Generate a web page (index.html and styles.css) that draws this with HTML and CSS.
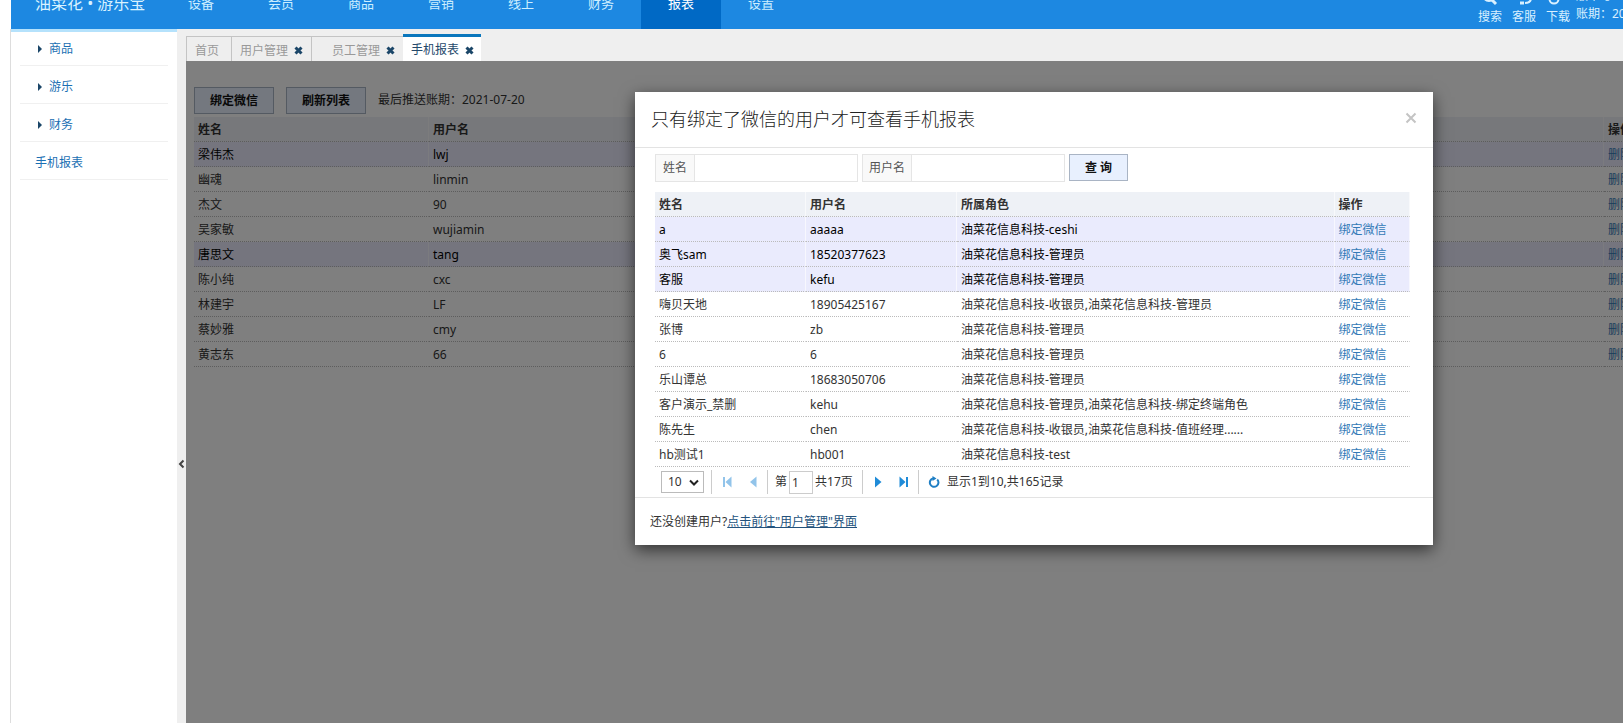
FILE: index.html
```html
<!DOCTYPE html>
<html lang="zh-CN">
<head>
<meta charset="utf-8">
<title>手机报表</title>
<link rel="stylesheet" href="styles.css">
</head>
<body>
<div class="page">
  <header class="topbar">
    <div class="topbar-inner">
      <div class="brand">油菜花 • 游乐宝</div>
      <nav class="menu">
        <a href="#">设备</a><a href="#">会员</a><a href="#">商品</a><a href="#">营销</a><a href="#">线上</a><a href="#">财务</a><a href="#" class="active">报表</a><a href="#">设置</a>
      </nav>
      <div class="tools">
        <a href="#"><svg width="24" height="20" viewBox="0 0 24 20"><circle cx="11" cy="8" r="6"/><path d="M14 13l4 4" stroke-width="3"/></svg>搜索</a>
        <a href="#"><svg width="24" height="20" viewBox="0 0 24 20"><path d="M5 11V8a7 7 0 0 1 14 0v3c0 3-2 5-6 5"/><path d="M8 16h4" stroke-width="3"/></svg>客服</a>
        <a href="#"><svg width="24" height="20" viewBox="0 0 24 20"><circle cx="8" cy="12" r="4.500"/><path d="M8 5v6"/></svg>下载</a>
        <div class="account"><span>版本号：旗舰版</span><span>账期：2021-07-20</span></div>
      </div>
    </div>
  </header>
  <div class="body">
    <aside class="sidebar">
      <ul>
        <li><a href="#" class="group">商品</a></li>
        <li><a href="#" class="group">游乐</a></li>
        <li><a href="#" class="group">财务</a></li>
        <li><a href="#">手机报表</a></li>
      </ul>
    </aside>
    <button class="splitter" type="button" aria-label="收起"><svg width="7" height="10" viewBox="0 0 7 10"><path d="M5.500 1.500L2 5l3.500 3.500"/></svg></button>
    <main class="main">
      <div class="tabs">
        <div class="tab"><span>首页</span></div>
        <div class="tab closable"><span>用户管理</span><button type="button" aria-label="关闭"><svg width="9" height="9" viewBox="0 0 9 9"><path d="M1.500 1.500l6 6M7.500 1.500l-6 6"/></svg></button></div>
        <div class="tab closable wide"><span>员工管理</span><button type="button" aria-label="关闭"><svg width="9" height="9" viewBox="0 0 9 9"><path d="M1.500 1.500l6 6M7.500 1.500l-6 6"/></svg></button></div>
        <div class="tab closable active"><span>手机报表</span><button type="button" aria-label="关闭"><svg width="9" height="9" viewBox="0 0 9 9"><path d="M1.500 1.500l6 6M7.500 1.500l-6 6"/></svg></button></div>
      </div>
      <div class="content">
        <div class="actions">
          <button type="button" class="btn">绑定微信</button>
          <button type="button" class="btn">刷新列表</button>
          <span>最后推送账期：2021-07-20</span>
        </div>
        <table class="grid users">
          <colgroup><col class="c-user"><col class="c-user"><col><col class="c-op"></colgroup>
          <thead><tr><th>姓名</th><th>用户名</th><th></th><th>操作</th></tr></thead>
          <tbody>
            <tr class="on"><td>梁伟杰</td><td>lwj</td><td></td><td><a href="#">删除</a></td></tr>
            <tr><td>幽魂</td><td>linmin</td><td></td><td><a href="#">删除</a></td></tr>
            <tr><td>杰文</td><td>90</td><td></td><td><a href="#">删除</a></td></tr>
            <tr><td>吴家敏</td><td>wujiamin</td><td></td><td><a href="#">删除</a></td></tr>
            <tr class="on"><td>唐思文</td><td>tang</td><td></td><td><a href="#">删除</a></td></tr>
            <tr><td>陈小纯</td><td>cxc</td><td></td><td><a href="#">删除</a></td></tr>
            <tr><td>林建宇</td><td>LF</td><td></td><td><a href="#">删除</a></td></tr>
            <tr><td>蔡妙雅</td><td>cmy</td><td></td><td><a href="#">删除</a></td></tr>
            <tr><td>黄志东</td><td>66</td><td></td><td><a href="#">删除</a></td></tr>
          </tbody>
        </table>
        <div class="overlay">
          <section class="modal" role="dialog" aria-labelledby="modal-title">
            <div class="modal-head">
              <h2 id="modal-title">只有绑定了微信的用户才可查看手机报表</h2>
              <button type="button" class="close" aria-label="关闭"><svg width="12" height="12" viewBox="0 0 12 12"><path d="M1.500 1.500l9 9M10.500 1.500l-9 9"/></svg></button>
            </div>
            <div class="modal-body">
              <form class="search">
                <div class="field"><label for="name">姓名</label><input id="name" type="text"></div>
                <div class="field account-field"><label for="user">用户名</label><input id="user" type="text"></div>
                <button type="button" class="btn query">查 询</button>
              </form>
              <table class="grid picker">
                <colgroup><col class="p20"><col class="p20"><col class="p50"><col class="p10"></colgroup>
                <thead><tr><th>姓名</th><th>用户名</th><th>所属角色</th><th>操作</th></tr></thead>
                <tbody>
                  <tr class="on"><td>a</td><td>aaaaa</td><td>油菜花信息科技-ceshi</td><td><a href="#">绑定微信</a></td></tr>
                  <tr class="on"><td>奥飞sam</td><td>18520377623</td><td>油菜花信息科技-管理员</td><td><a href="#">绑定微信</a></td></tr>
                  <tr class="on"><td>客服</td><td>kefu</td><td>油菜花信息科技-管理员</td><td><a href="#">绑定微信</a></td></tr>
                  <tr><td>嗨贝天地</td><td>18905425167</td><td>油菜花信息科技-收银员,油菜花信息科技-管理员</td><td><a href="#">绑定微信</a></td></tr>
                  <tr><td>张博</td><td>zb</td><td>油菜花信息科技-管理员</td><td><a href="#">绑定微信</a></td></tr>
                  <tr><td>6</td><td>6</td><td>油菜花信息科技-管理员</td><td><a href="#">绑定微信</a></td></tr>
                  <tr><td>乐山谭总</td><td>18683050706</td><td>油菜花信息科技-管理员</td><td><a href="#">绑定微信</a></td></tr>
                  <tr><td>客户演示_禁删</td><td>kehu</td><td>油菜花信息科技-管理员,油菜花信息科技-绑定终端角色</td><td><a href="#">绑定微信</a></td></tr>
                  <tr><td>陈先生</td><td>chen</td><td>油菜花信息科技-收银员,油菜花信息科技-值班经理......</td><td><a href="#">绑定微信</a></td></tr>
                  <tr><td>hb测试1</td><td>hb001</td><td>油菜花信息科技-test</td><td><a href="#">绑定微信</a></td></tr>
                </tbody>
              </table>
              <div class="pager">
                <div class="seg size"><span class="select"><select aria-label="每页条数"><option>10</option></select><svg width="10" height="7" viewBox="0 0 10 7"><path d="M1 1.500l4 4 4-4"/></svg></span></div>
                <div class="seg nav off">
                  <button type="button" aria-label="首页"><svg width="10" height="12" viewBox="0 0 10 12"><path d="M1 1h2v10H1zM9.500 .5v11L3.500 6z"/></svg></button>
                  <button type="button" aria-label="上一页"><svg width="8" height="12" viewBox="0 0 8 12"><path d="M7.500 .5v11L1 6z"/></svg></button>
                </div>
                <div class="seg jump"><label for="pageno">第</label><input id="pageno" type="text" value="1"><span>共17页</span></div>
                <div class="seg nav next">
                  <button type="button" aria-label="下一页"><svg width="8" height="12" viewBox="0 0 8 12"><path d="M1 .5v11L7.500 6z"/></svg></button>
                  <button type="button" aria-label="末页"><svg width="10" height="12" viewBox="0 0 10 12"><path d="M7 1h2v10H7zM.5 .5v11l6-5.500z"/></svg></button>
                </div>
                <div class="seg info"><button type="button" aria-label="刷新"><svg width="12" height="12" viewBox="0 0 12 12"><path class="ring" d="M9.200 3.500A4.300 4.300 0 1 1 5 2.400"/><path d="M4.500 0L8.500 2.400L4.500 5z"/></svg></button><span>显示1到10,共165记录</span></div>
              </div>
            </div>
            <div class="modal-foot">还没创建用户?<a href="#">点击前往"用户管理"界面</a></div>
          </section>
        </div>
      </div>
    </main>
  </div>
</div>
</body>
</html>
```
FILE: styles.css
```css
* { box-sizing: border-box; }
html { height: 100%; overflow: hidden; }
body {
  height: 100%; margin: 0; overflow: hidden; background: #fff; color: #333;
  font: 12px/22px "Noto Sans", "Noto Sans CJK SC", sans-serif;
}
a { color: #337ab7; text-decoration: none; }
button, input, select { font: inherit; color: inherit; margin: 0; padding: 0; }
button { cursor: pointer; }
ul { list-style: none; margin: 0; padding: 0; }
svg { display: block; }

/* The layout is wider than small windows; the excess is cut off. */
.page { display: flex; flex-direction: column; min-width: 1882px; height: 100%; padding-left: 10px; }

.topbar { display: flex; align-items: flex-end; height: 29px; margin-left: 1px; overflow: hidden; background: #1d88e1; flex: none; }
.topbar-inner { display: flex; flex: 1; height: 50px; color: #fff; }
.brand { width: 150px; padding-left: 24px; font-size: 16px; line-height: 48px; color: #d9f2ff; white-space: nowrap; }
.menu { display: flex; flex: 1; }
.menu a { width: 80px; text-align: center; font-size: 13px; line-height: 48px; color: #cdefff; }
.menu .active { background: #0069c5; color: #fff; }
.tools { display: flex; gap: 10px; width: 404px; }
.tools > a { width: 24px; color: #d9f0ff; line-height: 16px; padding-top: 8px; }
.tools svg { margin-bottom: 2px; fill: none; stroke: #d9f0ff; stroke-width: 2; }
.account { display: flex; flex-direction: column; justify-content: flex-end; margin-left: -4px; padding-bottom: 6px; line-height: 18px; color: #d9f0ff; white-space: nowrap; }

.body { display: flex; flex: 1; min-height: 0; }
.sidebar { width: 167px; border-left: 1px solid #ddd; flex: none; }
.sidebar ul { display: flex; flex-direction: column; gap: 4px; border-top: 3px solid #b5e2fc; padding: 0 9px; }
.sidebar li { border-bottom: 1px solid #f0f0f0; }
.sidebar a { display: flex; align-items: center; padding-left: 15px; line-height: 33px; color: #1a6fb3; }
.sidebar .group { padding-left: 18px; }
.group::before { content: ""; margin-right: 7px; border: 4px solid transparent; border-left: 4px solid #1b4668; border-right: 0; }
.splitter { display: flex; align-items: center; width: 9px; border: 0; padding: 176px 0 0 1px; background: #efefef; flex: none; }
.splitter svg { fill: none; stroke: #444; stroke-width: 2; }

.main { display: flex; flex-direction: column; flex: 1; min-width: 0; }
.tabs { display: flex; align-items: flex-end; height: 32px; background: #efefef; flex: none; }
.tab { display: flex; align-items: center; height: 25px; width: 45px; padding: 3px 0 0 8px; border: 1px solid #c4c4c4; border-bottom: 0; border-right: 0; color: #999; background: #eee; line-height: 20px; white-space: nowrap; }
.tab button { display: flex; border: 0; background: none; }
.tab svg { fill: none; stroke: #1b4668; stroke-width: 3; }
.tab.closable { gap: 6px; width: 80px; }
.tab.wide { width: 92px; padding-left: 20px; }
.tab.active { width: 78px; height: 27px; padding-top: 2px; border: 0; border-top: 3px solid #0a77bd; background: #fff; color: #24486b; }

.content { position: relative; flex: 1; min-height: 0; padding: 26px 0 0 8px; }
.actions { display: flex; gap: 12px; margin-bottom: 3px; }
.actions span { line-height: 25px; }
.btn { width: 80px; height: 27px; border: 1px solid #a9b4c4; background: #e8f0fe; color: #111; font-weight: 700; }

.grid { width: 100%; border-collapse: separate; border-spacing: 0; table-layout: fixed; }
.grid th, .grid td { height: 25px; padding: 2px 4px 0; border-bottom: 1px dotted #bbb; border-right: 1px solid rgba(255, 255, 255, .6); text-align: left; white-space: nowrap; overflow: hidden; }
.grid th { background: #eef1f6; font-weight: 700; }
.grid .on td { background: #eaebfd; color: #000; }
.c-user { width: 235px; }
.c-op { width: 278px; }

.overlay { position: absolute; inset: 0; display: flex; align-items: flex-start; justify-content: center; padding-top: 31px; background: rgba(0, 0, 0, .5); }
.modal { width: 798px; background: #fff; box-shadow: 0 5px 15px rgba(0, 0, 0, .6); }
.modal-head { display: flex; justify-content: space-between; align-items: flex-start; height: 56px; padding: 16px 16px 0; border-bottom: 1px solid #e3e3e3; }
.modal-head h2 { margin: 0; font-size: 18px; font-weight: 300; color: #222; }
.close { padding-top: 4px; border: 0; background: none; }
.close svg { fill: none; stroke: #c4c4c4; stroke-width: 2; }
.modal-body { padding: 6px 23px 0 20px; border-bottom: 1px solid #e3e3e3; }
.search { display: flex; gap: 4px; margin: 0 0 10px; }
.field { display: flex; width: 203px; height: 28px; border: 1px solid #e5e5e5; }
.field label { width: 39px; text-align: center; background: #f9f9f9; color: #555; line-height: 26px; flex: none; border-right: 1px solid #e5e5e5; }
.field input { flex: 1; min-width: 0; border: 0; padding: 0 6px; }
.account-field label { width: 49px; }
.query { width: 59px; }
.p20 { width: 20%; }
.p50 { width: 50%; }
.p10 { width: 10%; }

.pager { display: flex; align-items: center; height: 30px; padding-left: 6px; }
.seg { display: flex; align-items: center; height: 24px; border-left: 1px solid #ccc; white-space: nowrap; }
.seg.size { border: 0; width: 50px; }
.select { position: relative; display: block; width: 43px; height: 22px; border: 1px solid #bbb; }
.select select { display: block; width: 100%; height: 20px; padding-left: 6px; border: 0; appearance: none; background: none; line-height: 20px; }
.select svg { position: absolute; right: 4px; top: 7px; fill: none; stroke: #222; stroke-width: 2; pointer-events: none; }
.nav { gap: 17px; width: 56px; padding-left: 10px; fill: #1f8bd8; }
.nav.next { padding-left: 11px; }
.nav.off { fill: #92c4ea; }
.nav button, .info button { border: 0; background: none; }
.jump { width: 95px; padding-left: 7px; gap: 2px; }
.jump input { width: 24px; height: 23px; padding: 0 2px; border: 1px solid #ccc; }
.info { gap: 7px; padding-left: 9px; fill: #1f7fc4; }
.ring { fill: none; stroke: #1f7fc4; stroke-width: 2; }
.modal-foot { padding: 13px 15px 12px; }
.modal-foot a { color: #23527c; text-decoration: underline; }
```
